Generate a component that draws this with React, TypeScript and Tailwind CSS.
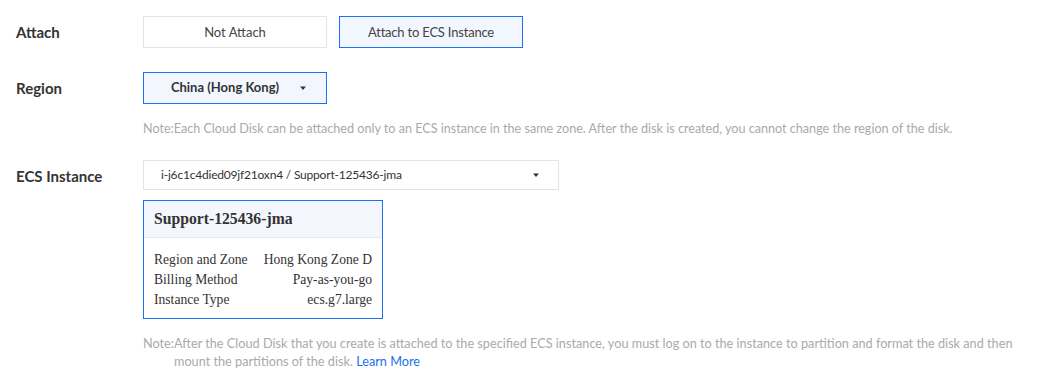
const sans = "font-['Lato','Noto_Sans',sans-serif]";

function Caret() {
  return (
    <svg width="8" height="5" viewBox="0 0 8 5" className="fill-[#333]">
      <path d="M1 0.5 L7 0.5 L4 4 Z" />
    </svg>
  );
}

function Row({ label, children, className, labelClass }: { label: string; children: React.ReactNode; className?: string; labelClass?: string }) {
  return (
    <div className={`flex ${className || ""}`}>
      <div className={`w-[143px] shrink-0 pl-4 text-[15px] font-bold text-[#333] leading-[20px] ${labelClass || ""}`}>{label}</div>
      <div className="flex-1">{children}</div>
    </div>
  );
}

export default function App() {
  return (
    <div className={`w-[1048px] h-[386px] bg-white ${sans} text-[#333]`}>
      <div className="pt-4">
        {/* Attach */}
        <Row label="Attach" className="items-center">
          <div className="flex gap-3">
            <button className="w-[184px] h-[32px] pt-px border border-[#e3e3e3] bg-white text-[13px] text-[#444]">
              Not Attach
            </button>
            <button className="w-[184px] h-[32px] pt-px border border-[#1b6ff0] bg-[#f2f6fe] text-[13px] text-[#444] tracking-[-0.2px]">
              Attach to ECS Instance
            </button>
          </div>
        </Row>

        {/* Region */}
        <Row label="Region" className="items-center mt-6">
          <button className="w-[184px] h-[32px] border border-[#1b6ff0] bg-[#f2f6fe] text-[13px] font-bold text-[#333] flex items-center justify-center gap-[20px] pl-[8px]">
            <span>China (Hong Kong)</span>
            <Caret />
          </button>
        </Row>
        <div className="pl-[143px] mt-[17px] text-[12.6px] text-[#aaa] leading-[16px]">
          Note:Each Cloud Disk can be attached only to an ECS instance in the same zone. After the disk is created, you cannot change the region of the disk.
        </div>

        {/* ECS Instance */}
        <Row label="ECS Instance" className="mt-[23px] items-start" labelClass="mt-[6px]">
          <div className="w-[416px] h-[30px] border border-[#e3e3e3] flex items-center justify-between pl-[17px] pr-[18px] text-[12px] tracking-[-0.2px] text-[#333]">
            <span>i-j6c1c4died09jf21oxn4 / Support-125436-jma</span>
            <Caret />
          </div>
          <div className="mt-[10px] w-[240px] border border-[#1b6ff0] font-['Liberation_Serif',serif] text-[#333]">
            <div className="h-[37px] bg-[#f3f7fd] border-b border-[#e6e9ee] flex items-center px-[10px] text-[15.7px] font-bold">
              Support-125436-jma
            </div>
            <div className="px-[10px] pt-[12px] pb-[8px] text-[13.6px] leading-[20px]">
              <div className="flex justify-between"><span>Region and Zone</span><span>Hong Kong Zone D</span></div>
              <div className="flex justify-between"><span>Billing Method</span><span>Pay-as-you-go</span></div>
              <div className="flex justify-between"><span>Instance Type</span><span>ecs.g7.large</span></div>
            </div>
          </div>
        </Row>
        <div className="pl-[143px] pr-[30px] mt-[15px] text-[12.7px] text-[#aaa] leading-[18px] flex">
          <span className="shrink-0">Note:</span>
          <span>
            After the Cloud Disk that you create is attached to the specified ECS instance, you must log on to the instance to partition and format the disk and then mount the partitions of the disk.{" "}
            <a className="text-[#1b6ff0]">Learn More</a>
          </span>
        </div>
      </div>
    </div>
  );
}
